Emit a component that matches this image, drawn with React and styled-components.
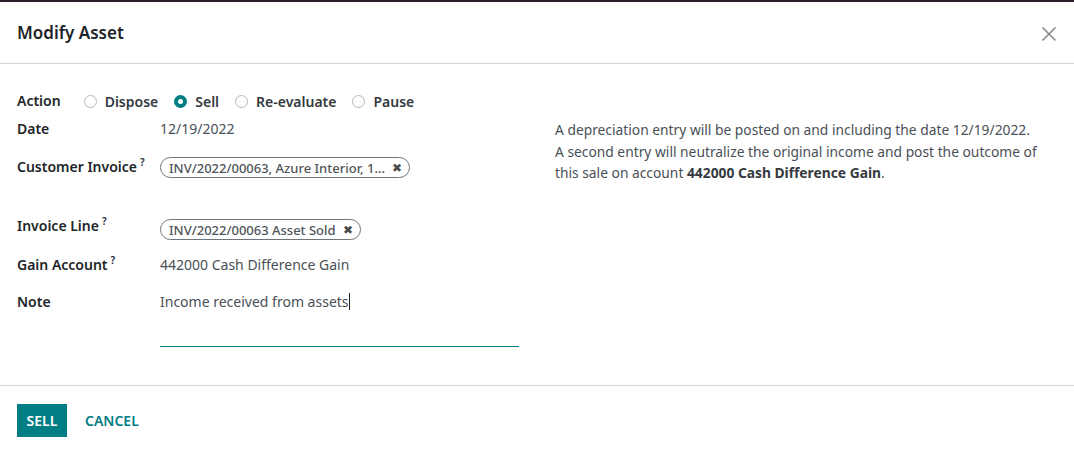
import React from 'react'
import styled, { createGlobalStyle } from 'styled-components'

const GlobalStyle = createGlobalStyle`
  html, body {
    margin: 0;
    padding: 0;
    background: #ffffff;
  }
  body {
    font-family: 'Noto Sans', 'Open Sans', sans-serif;
    font-size: 14px;
    color: #212529;
  }
`

const Dialog = styled.div`
  width: 1074px;
  height: 453px;
  display: flex;
  flex-direction: column;
  background: #fff;
  overflow: hidden;
`

const NavStrip = styled.div`
  height: 2px;
  background: #2c1d2b;
`

const Header = styled.div`
  height: 62px;
  display: flex;
  align-items: center;
  justify-content: space-between;
  padding: 0 16px 0 17px;
  border-bottom: 1px solid #d4d5d8;
  box-sizing: border-box;
`

const Title = styled.h4`
  margin: 0;
  font-size: 17px;
  font-weight: 600;
  color: #212529;
`

const CloseButton = styled.button`
  border: none;
  background: none;
  padding: 0;
  width: 18px;
  height: 18px;
  display: flex;
  align-items: center;
  justify-content: center;
  cursor: pointer;
  margin-top: 2px;
`

const Body = styled.div`
  height: 322px;
  display: flex;
  padding: 24px 17px 0 17px;
  border-bottom: 1px solid #d4d5d8;
  box-sizing: border-box;
`

const FormColumn = styled.div`
  width: 502px;
  display: flex;
  flex-direction: column;
`

const InfoColumn = styled.div`
  flex: 1;
  padding: 31px 0 0 36px;
  color: #495057;
  font-size: 13.8px;
  line-height: 21.5px;
  white-space: nowrap;

  b {
    font-weight: 700;
    color: #343a40;
  }
`

const ActionRow = styled.div`
  display: flex;
  align-items: center;
  height: 26px;
`

const RadioGroup = styled.div`
  display: flex;
  align-items: center;
  gap: 16px;
  margin-left: 23px;
`

const RadioOption = styled.label`
  display: flex;
  align-items: center;
  gap: 8px;
  font-weight: 600;
  color: #343a40;
`

const RadioCircle = styled.span`
  width: 13px;
  height: 13px;
  border-radius: 50%;
  box-sizing: border-box;
  background: #fff;
  border: ${p => (p.$checked ? '4px solid #017e84' : '1px solid #b4b9be')};
`

const Row = styled.div`
  display: grid;
  grid-template-columns: 143px 1fr;
  align-items: start;
  height: ${p => p.$h}px;
  margin-top: ${p => p.$mt || 0}px;
`

const Label = styled.div`
  font-weight: 600;
  color: #212529;
  line-height: ${p => p.$lh || 26}px;
  white-space: nowrap;

  sup {
    font-size: 10px;
    color: #1e2b3c;
    margin-left: 3px;
    vertical-align: 6px;
    line-height: 0;
  }
`

const Value = styled.div`
  color: #495057;
  line-height: 26px;
`

const TagWrap = styled.div`
  padding-top: ${p => p.$pt || 3}px;
`

const Tag = styled.span`
  display: inline-flex;
  align-items: center;
  gap: 7px;
  height: 21px;
  padding: 0 7px 0 8px;
  border: 1px solid #6c757d;
  border-radius: 11px;
  box-sizing: border-box;
  font-size: 13px;
  font-weight: 500;
  color: #4f5559;
  white-space: nowrap;
`

const TagClose = styled.span`
  font-size: 12px;
  color: #4a4a4a;
`

const NoteField = styled.div`
  height: 57px;
  border-bottom: 1px solid #017e84;
  width: 359px;
  color: #495057;
  line-height: 26px;
`

const Caret = styled.span`
  display: inline-block;
  width: 1px;
  height: 17px;
  background: #222;
  vertical-align: -3px;
`

const Footer = styled.div`
  display: flex;
  align-items: center;
  gap: 18px;
  padding: 18px 17px 0 17px;
`

const PrimaryButton = styled.button`
  height: 33px;
  padding: 0 8px;
  min-width: 50px;
  border: none;
  background: #017e84;
  color: #fff;
  font-family: inherit;
  font-size: 14px;
  font-weight: 600;
  text-transform: uppercase;
`

const LinkButton = styled.button`
  border: none;
  background: none;
  padding: 0;
  color: #017e84;
  font-family: inherit;
  font-size: 14px;
  font-weight: 600;
  text-transform: uppercase;
`

const actions = [
  { label: 'Dispose', checked: false },
  { label: 'Sell', checked: true },
  { label: 'Re-evaluate', checked: false },
  { label: 'Pause', checked: false },
]

function App() {
  return (
    <>
      <GlobalStyle />
      <Dialog>
        <NavStrip />
        <Header>
          <Title>Modify Asset</Title>
          <CloseButton aria-label="Close">
            <svg width="16" height="16" viewBox="0 0 16 16">
              <path d="M1.5 1.5 L14.5 14.5 M14.5 1.5 L1.5 14.5" stroke="#8a8a8a" strokeWidth="1.6" />
            </svg>
          </CloseButton>
        </Header>

        <Body>
          <FormColumn>
            <ActionRow>
              <Label>Action</Label>
              <RadioGroup>
                {actions.map(a => (
                  <RadioOption key={a.label}>
                    <RadioCircle $checked={a.checked} />
                    {a.label}
                  </RadioOption>
                ))}
              </RadioGroup>
            </ActionRow>

            <Row $h={26} $mt={2}>
              <Label>Date</Label>
              <Value>12/19/2022</Value>
            </Row>

            <Row $h={60} $mt={12}>
              <Label>Customer Invoice<sup>?</sup></Label>
              <TagWrap>
                <Tag>INV/2022/00063, Azure Interior, 1...<TagClose>✖</TagClose></Tag>
              </TagWrap>
            </Row>

            <Row $h={38}>
              <Label $lh={24}>Invoice Line<sup>?</sup></Label>
              <TagWrap $pt={5}>
                <Tag>INV/2022/00063 Asset Sold<TagClose>✖</TagClose></Tag>
              </TagWrap>
            </Row>

            <Row $h={37}>
              <Label>Gain Account<sup>?</sup></Label>
              <Value>442000 Cash Difference Gain</Value>
            </Row>

            <Row $h={57}>
              <Label>Note</Label>
              <NoteField>Income received from assets<Caret /></NoteField>
            </Row>
          </FormColumn>

          <InfoColumn>
            A depreciation entry will be posted on and including the date 12/19/2022.
            <br />
            A second entry will neutralize the original income and post the outcome of
            <br />
            this sale on account <b>442000 Cash Difference Gain</b>.
          </InfoColumn>
        </Body>

        <Footer>
          <PrimaryButton>Sell</PrimaryButton>
          <LinkButton>Cancel</LinkButton>
        </Footer>
      </Dialog>
    </>
  )
}

export default App
